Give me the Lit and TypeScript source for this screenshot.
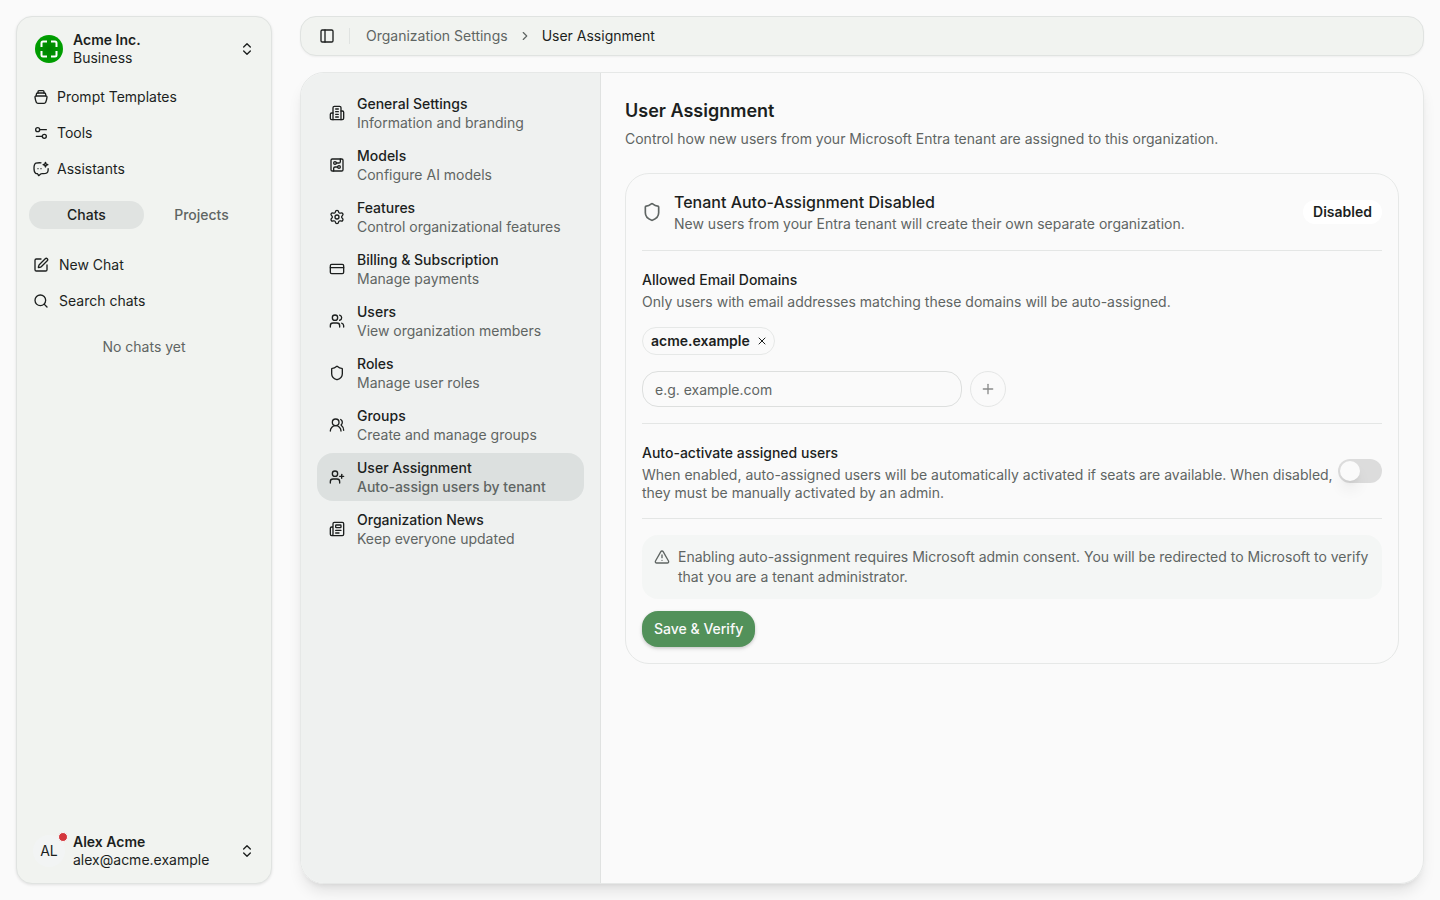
import { LitElement, html, css, svg, nothing } from "lit";
import { customElement, property, state } from "lit/decorators.js";
import { classMap } from "lit/directives/class-map.js";

const icons: Record<string, unknown> = {
  stack: svg`<path d="M4.500 10.500h15a1.500 1.500 0 0 1 1.500 1.700c-.4 3.300-1 5.800-2 7.800a2.500 2.500 0 0 1-2.300 1.500H7.300A2.500 2.500 0 0 1 5 20c-1-2-1.600-4.500-2-7.800a1.500 1.500 0 0 1 1.500-1.700Z"/><path d="M5 10V8a2 2 0 0 1 2-2h10a2 2 0 0 1 2 2v2"/><path d="M7.500 6V4A1.500 1.500 0 0 1 9 2.500h6A1.500 1.500 0 0 1 16.500 4v2"/>`,
  sliders: svg`<path d="M20 7h-9"/><path d="M14 17H5"/><circle cx="17" cy="17" r="3"/><circle cx="7" cy="7" r="3"/>`,
  assistant: svg`<path d="M12 2.700C8 2.500 6 2.700 4.300 3.300 2 4.200 1.500 6.500 1.500 11s.5 6.500 2.500 7.500c1 .5 2 .5 2.800.6L8.500 22l3-2.500c.5-.4 1-.5 2-.5H16c4 0 6-1 6.500-4 .2-1 .2-2 .2-3.500"/><path d="M18.700 2l1 2.500 2.500 1-2.500 1-1 2.500-1-2.500-2.500-1 2.500-1Z"/><path d="M7.500 11.500h.01M12 11.500h.01"/>`,
  edit: svg`<path d="M12 3H5a2 2 0 0 0-2 2v14a2 2 0 0 0 2 2h14a2 2 0 0 0 2-2v-7"/><path d="M18.375 2.625a1 1 0 0 1 3 3l-9.013 9.014a2 2 0 0 1-.853.505l-2.873.84a.5.5 0 0 1-.62-.62l.84-2.873a2 2 0 0 1 .506-.852z"/>`,
  search: svg`<circle cx="11" cy="11" r="8"/><path d="m21 21-4.300-4.300"/>`,
  chevrons: svg`<path d="m7 15 5 5 5-5"/><path d="m7 9 5-5 5 5"/>`,
  chevron: svg`<path d="m9 18 6-6-6-6"/>`,
  panel: svg`<rect width="18" height="18" x="3" y="3" rx="2"/><path d="M9 3v18"/>`,
  building: svg`<path d="M6 22V4a2 2 0 0 1 2-2h8a2 2 0 0 1 2 2v18Z"/><path d="M6 12H4a2 2 0 0 0-2 2v6a2 2 0 0 0 2 2h2"/><path d="M18 9h2a2 2 0 0 1 2 2v9a2 2 0 0 1-2 2h-2"/><path d="M10 6h4"/><path d="M10 10h4"/><path d="M10 14h4"/><path d="M10 18h4"/>`,
  circuit: svg`<rect width="18" height="18" x="3" y="3" rx="2"/><path d="M11 9h4a2 2 0 0 0 2-2V3"/><circle cx="9" cy="9" r="2"/><path d="M7 21v-4a2 2 0 0 1 2-2h4"/><circle cx="15" cy="15" r="2"/>`,
  gear: svg`<path d="M9.671 4.136a2.340 2.340 0 0 1 4.659 0 2.340 2.340 0 0 0 3.319 1.915 2.340 2.340 0 0 1 2.330 4.033 2.340 2.340 0 0 0 0 3.831 2.340 2.340 0 0 1-2.330 4.033 2.340 2.340 0 0 0-3.319 1.915 2.340 2.340 0 0 1-4.659 0 2.340 2.340 0 0 0-3.320-1.915 2.340 2.340 0 0 1-2.330-4.033 2.340 2.340 0 0 0 0-3.831A2.340 2.340 0 0 1 6.350 6.051a2.340 2.340 0 0 0 3.319-1.915"/><circle cx="12" cy="12" r="3"/>`,
  card: svg`<rect width="20" height="14" x="2" y="5" rx="2"/><path d="M2 10h20"/>`,
  users: svg`<path d="M16 21v-2a4 4 0 0 0-4-4H6a4 4 0 0 0-4 4v2"/><circle cx="9" cy="7" r="4"/><path d="M22 21v-2a4 4 0 0 0-3-3.870"/><path d="M16 3.130a4 4 0 0 1 0 7.750"/>`,
  shield: svg`<path d="M20 13c0 5-3.500 7.500-7.660 8.950a1 1 0 0 1-.67-.01C7.500 20.500 4 18 4 13V6a1 1 0 0 1 1-1c2 0 4.500-1.200 6.240-2.720a1.170 1.170 0 0 1 1.520 0C14.510 3.810 17 5 19 5a1 1 0 0 1 1 1z"/>`,
  groups: svg`<path d="M18 21a8 8 0 0 0-16 0"/><circle cx="10" cy="8" r="5"/><path d="M22 20c0-3.370-2-6.500-4-8a5 5 0 0 0-.45-8.300"/>`,
  userPlus: svg`<path d="M16 21v-2a4 4 0 0 0-4-4H6a4 4 0 0 0-4 4v2"/><circle cx="9" cy="7" r="4"/><path d="M19 8v6"/><path d="M22 11h-6"/>`,
  news: svg`<path d="M15 18h-5"/><path d="M18 14h-8"/><path d="M4 22h16a2 2 0 0 0 2-2V4a2 2 0 0 0-2-2H8a2 2 0 0 0-2 2v16a2 2 0 0 1-4 0v-9a2 2 0 0 1 2-2h2"/><rect width="8" height="4" x="10" y="6" rx="1"/>`,
  x: svg`<path d="M18 6 6 18"/><path d="m6 6 12 12"/>`,
  plus: svg`<path d="M5 12h14"/><path d="M12 5v14"/>`,
  warn: svg`<path d="m21.730 18-8-14a2 2 0 0 0-3.480 0l-8 14A2 2 0 0 0 4 21h16a2 2 0 0 0 1.730-3"/><path d="M12 9v4"/><path d="M12 17h.01"/>`,
};

const icon = (name: string, size = 16) => html`<svg
  width=${size} height=${size} viewBox="0 0 24 24" fill="none" stroke="currentColor"
  stroke-width="2" stroke-linecap="round" stroke-linejoin="round" aria-hidden="true"
>${icons[name]}</svg>`;

const base = css`
  * { box-sizing: border-box; }
  svg { flex: none; display: block; }
  a { color: inherit; text-decoration: none; }
  p, h1, h2, h3 { margin: 0; }
  button, input {
    font: inherit;
    color: inherit;
    margin: 0;
    padding: 0;
    border: 0;
    background: none;
  }
  button { cursor: pointer; }
  button:disabled { cursor: default; }
`;

@customElement("app-sidebar")
class AppSidebar extends LitElement {
  @state() private tab = "Chats";

  static styles = [base, css`
    :host {
      display: flex;
      flex-direction: column;
      background: #f1f3f0;
      border: 1px solid #e0e3e1;
      border-radius: 16px;
      box-shadow: 0 1px 3px rgb(0 0 0 / 0.1);
      padding: 8px;
    }
    .account {
      display: flex;
      align-items: center;
      gap: 8px;
      width: 100%;
      height: 48px;
      padding: 0 8px;
      text-align: left;
      line-height: 18px;
    }
    .names { flex: 1; min-width: 0; }
    .names strong, .names span { display: block; }
    .names strong { font-weight: 600; }
    .avatar {
      position: relative;
      display: grid;
      place-items: center;
      width: 32px;
      height: 32px;
      border-radius: 50%;
    }
    .initials { background: #f2f4f4; }
    .dot {
      position: absolute;
      top: -3px;
      right: -3px;
      width: 10px;
      height: 10px;
      border: 1px solid #fafafa;
      border-radius: 50%;
      background: #d4363c;
    }
    nav { display: grid; gap: 4px; padding: 8px 0; }
    .link {
      display: flex;
      align-items: center;
      gap: 8px;
      height: 32px;
      padding: 0 8px;
    }
    .tabs { display: flex; padding: 8px 4px; }
    .tab {
      flex: 1;
      height: 28px;
      border-radius: 14px;
      font-weight: 500;
      color: #5f6563;
    }
    .tab.on { background: #e0e3e1; color: #1c1f1e; }
    .actions { padding: 12px 0; }
    .actions .link { gap: 10px; }
    .empty {
      flex: 1;
      padding-top: 8px;
      line-height: 20px;
      text-align: center;
      color: #5f6563;
    }
  `];

  render() {
    const links = [["stack", "Prompt Templates"], ["sliders", "Tools"], ["assistant", "Assistants"]];
    return html`
      <button class="account">
        <span class="avatar">
          <svg width="28" height="28" viewBox="0 0 28 28" aria-hidden="true">
            <defs><radialGradient id="g"><stop offset="0" stop-color="#008000"/><stop offset="1" stop-color="#00a000"/></radialGradient></defs>
            <circle cx="14" cy="14" r="14" fill="url(#g)"/>
            <path d="M6.500 12V8A1.500 1.500 0 0 1 8 6.500h4M16 6.500h4A1.500 1.500 0 0 1 21.500 8v4M21.500 16v4a1.500 1.500 0 0 1-1.500 1.500h-4M12 21.500H8A1.500 1.500 0 0 1 6.500 20v-4" fill="none" stroke="#fff" stroke-width="2"/>
          </svg>
        </span>
        <span class="names"><strong>Acme Inc.</strong><span>Business</span></span>
        ${icon("chevrons")}
      </button>
      <nav aria-label="Workspace">
        ${links.map(([i, t]) => html`<a class="link" href="#">${icon(i)}<span>${t}</span></a>`)}
      </nav>
      <div class="tabs" role="tablist">
        ${["Chats", "Projects"].map((t) => html`<button
          class=${classMap({ tab: true, on: t === this.tab })} role="tab"
          aria-selected=${t === this.tab} @click=${() => (this.tab = t)}>${t}</button>`)}
      </div>
      <nav class="actions" aria-label="Chats">
        <a class="link" href="#">${icon("edit")}<span>New Chat</span></a>
        <a class="link" href="#">${icon("search")}<span>Search chats</span></a>
      </nav>
      <p class="empty">No chats yet</p>
      <button class="account">
        <span class="avatar initials">AL<span class="dot"></span></span>
        <span class="names"><strong>Alex Acme</strong><span>alex@acme.example</span></span>
        ${icon("chevrons")}
      </button>
    `;
  }
}

@customElement("settings-nav")
class SettingsNav extends LitElement {
  @property() current = "";

  static styles = [base, css`
    :host {
      display: flex;
      flex-direction: column;
      gap: 4px;
      padding: 16px;
      background: #eff1f0;
      border-right: 1px solid #e0e2e1;
    }
    .item {
      display: flex;
      align-items: center;
      gap: 12px;
      height: 48px;
      padding: 0 12px;
      border-radius: 16px;
      line-height: 19px;
    }
    .item.on { background: #dce0df; }
    .title, .note { display: block; }
    .title { font-weight: 500; }
    .note { color: #5f6563; }
    .on .note { font-weight: 500; }
  `];

  private items = [
    ["building", "General Settings", "Information and branding"],
    ["circuit", "Models", "Configure AI models"],
    ["gear", "Features", "Control organizational features"],
    ["card", "Billing & Subscription", "Manage payments"],
    ["users", "Users", "View organization members"],
    ["shield", "Roles", "Manage user roles"],
    ["groups", "Groups", "Create and manage groups"],
    ["userPlus", "User Assignment", "Auto-assign users by tenant"],
    ["news", "Organization News", "Keep everyone updated"],
  ];

  render() {
    return this.items.map(([i, title, note]) => html`
      <a class=${classMap({ item: true, on: title === this.current })} href="#"
        aria-current=${title === this.current ? "page" : nothing}>
        ${icon(i)}
        <span><span class="title">${title}</span><span class="note">${note}</span></span>
      </a>`);
  }
}

@customElement("assignment-panel")
class AssignmentPanel extends LitElement {
  @state() private domains = ["acme.example"];
  @state() private draft = "";

  static styles = [base, css`
    :host { display: block; padding: 24px; }
    h1 { font-size: 18px; line-height: 28px; font-weight: 600; }
    .muted { color: #5f6563; }
    .lead { line-height: 20px; margin-top: 4px; }
    .card {
      margin-top: 24px;
      padding: 16px;
      border: 1px solid #e6e8e7;
      border-radius: 24px;
    }
    .status { display: flex; align-items: center; gap: 12px; padding-bottom: 16px; }
    .status svg { color: #5f6563; }
    .grow { flex: 1; min-width: 0; }
    h2 { font-size: 16px; line-height: 24px; font-weight: 500; }
    .status p { line-height: 20px; }
    .badge {
      padding: 0 10px;
      border-radius: 12px;
      background: #fff;
      line-height: 24px;
      font-weight: 600;
    }
    .section { border-top: 1px solid #e4e6e5; padding: 16px 0; }
    .label { display: block; padding-top: 4px; line-height: 18px; font-weight: 500; }
    .hint { line-height: 18px; margin-top: 4px; }
    .chips { display: flex; flex-wrap: wrap; gap: 8px; margin: 16px 0; }
    .chip {
      display: flex;
      align-items: center;
      gap: 4px;
      height: 28px;
      padding: 0 4px 0 8px;
      border: 1px solid #e6e8e7;
      border-radius: 14px;
      font-weight: 600;
    }
    .remove { display: grid; place-items: center; width: 16px; height: 16px; }
    .add { display: flex; gap: 8px; }
    .domain {
      flex: 0 1 320px;
      width: 320px;
      min-width: 0;
      height: 36px;
      padding: 0 12px;
      border: 1px solid #dddfde;
      border-radius: 16px;
    }
    .domain::placeholder { color: #5f6563; opacity: 1; }
    .plus {
      display: grid;
      place-items: center;
      width: 36px;
      height: 36px;
      border: 1px solid #e6e8e7;
      border-radius: 18px;
    }
    .plus:disabled { opacity: 0.5; color: #1c1f1e; border-color: #d0d3d2; }
    .toggle { display: flex; align-items: center; gap: 4px; }
    .switch {
      appearance: none;
      display: flex;
      align-items: center;
      flex: none;
      width: 44px;
      height: 24px;
      padding: 0 2px;
      border-radius: 12px;
      background: #dcdcdc;
    }
    .switch::before {
      content: "";
      width: 20px;
      height: 20px;
      border-radius: 50%;
      background: #fafafa;
      box-shadow: 0 10px 15px -3px rgb(0 0 0 / 0.1), 0 4px 6px -4px rgb(0 0 0 / 0.1);
    }
    .switch:checked { background: #52915a; justify-content: flex-end; }
    .alert {
      display: flex;
      gap: 8px;
      padding: 12px;
      border-radius: 16px;
      background: #f4f6f5;
      line-height: 20px;
    }
    .alert svg { margin-top: 2px; }
    .footer { border-top: 1px solid #e4e6e5; padding-top: 16px; }
    .save {
      margin-top: 12px;
      height: 36px;
      padding: 0 12px;
      border-radius: 16px;
      background: #52915a;
      color: #fafafa;
      font-weight: 500;
      display: block;
      box-shadow: 0 1px 3px rgb(0 0 0 / 0.12), 0 2px 4px rgb(0 0 0 / 0.1);
    }
  `];

  private add(e: Event) {
    e.preventDefault();
    if (this.draft) this.domains = [...this.domains, this.draft];
    this.draft = "";
  }

  render() {
    return html`
      <h1>User Assignment</h1>
      <p class="lead muted">Control how new users from your Microsoft Entra tenant are assigned to this organization.</p>
      <section class="card">
        <div class="status">
          ${icon("shield", 20)}
          <div class="grow">
            <h2>Tenant Auto-Assignment Disabled</h2>
            <p class="muted">New users from your Entra tenant will create their own separate organization.</p>
          </div>
          <span class="badge">Disabled</span>
        </div>
        <div class="section">
          <label class="label" for="domain">Allowed Email Domains</label>
          <p class="hint muted">Only users with email addresses matching these domains will be auto-assigned.</p>
          <div class="chips">
            ${this.domains.map((d) => html`<span class="chip">${d}
              <button class="remove" aria-label="Remove ${d}"
                @click=${() => (this.domains = this.domains.filter((o) => o !== d))}>${icon("x", 12)}</button>
            </span>`)}
          </div>
          <form class="add" @submit=${this.add}>
            <input class="domain" id="domain" type="text" placeholder="e.g. example.com" .value=${this.draft}
              @input=${(e: Event) => (this.draft = (e.target as HTMLInputElement).value)} />
            <button class="plus" aria-label="Add domain" ?disabled=${!this.draft}>${icon("plus")}</button>
          </form>
        </div>
        <div class="section toggle">
          <div class="grow">
            <label class="label" for="auto">Auto-activate assigned users</label>
            <p class="hint muted">When enabled, auto-assigned users will be automatically activated if seats are available. When disabled, they must be manually activated by an admin.</p>
          </div>
          <input class="switch" id="auto" type="checkbox" role="switch" />
        </div>
        <div class="footer">
          <div class="alert muted">${icon("warn")}<p>Enabling auto-assignment requires Microsoft admin consent. You will be redirected to Microsoft to verify that you are a tenant administrator.</p></div>
          <button class="save">Save &amp; Verify</button>
        </div>
      </section>
    `;
  }
}

@customElement("app-root")
class AppRoot extends LitElement {
  static styles = [base, css`
    :host {
      box-sizing: border-box;
      display: grid;
      grid-template-columns: 256px minmax(0, 1fr);
      gap: 28px;
      min-height: 100vh;
      padding: 16px;
      background: #fafafa;
      color: #1c1f1e;
      font-family: Inter, sans-serif;
      font-size: 14px;
      line-height: 20px;
    }
    main { display: flex; flex-direction: column; gap: 16px; }
    .bar {
      display: flex;
      align-items: center;
      height: 40px;
      padding: 0 18px;
      background: #f1f3f0;
      border: 1px solid #e0e3e1;
      border-radius: 16px;
      box-shadow: 0 1px 2px rgb(0 0 0 / 0.05);
    }
    .rule { width: 1px; height: 16px; margin: 0 16px 0 14px; background: #e0e3e1; }
    .crumbs { display: flex; align-items: center; gap: 10px; }
    .crumbs a, .crumbs svg { color: #5f6563; }
    .frame {
      flex: 1;
      display: grid;
      grid-template-columns: 300px minmax(0, 1fr);
      overflow: hidden;
      border: 1px solid #e6e8e7;
      border-radius: 24px;
      box-shadow: 0 10px 15px -3px rgb(0 0 0 / 0.1), 0 4px 6px -4px rgb(0 0 0 / 0.1);
    }
  `];

  render() {
    return html`
      <app-sidebar></app-sidebar>
      <main>
        <header class="bar">
          <button aria-label="Toggle sidebar">${icon("panel")}</button>
          <span class="rule"></span>
          <nav class="crumbs" aria-label="Breadcrumb">
            <a href="#">Organization Settings</a>${icon("chevron", 14)}<span aria-current="page">User Assignment</span>
          </nav>
        </header>
        <div class="frame">
          <settings-nav current="User Assignment"></settings-nav>
          <assignment-panel></assignment-panel>
        </div>
      </main>
    `;
  }
}
